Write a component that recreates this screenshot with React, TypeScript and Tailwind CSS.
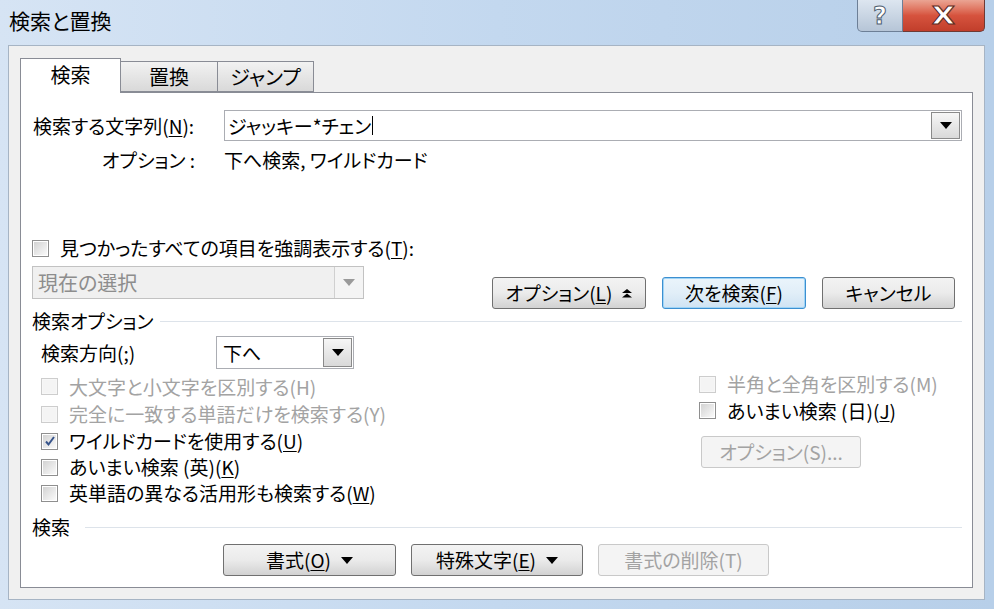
import React from 'react';

const font = "font-['Noto_Sans_CJK_JP','Noto_Sans',sans-serif] [font-feature-settings:'palt']";

const DownArrow = ({ color = '#000' }: { color?: string }) => (
  <svg width="12" height="7" viewBox="0 0 12 7">
    <path d="M0 0h12L6 7z" fill={color} />
  </svg>
);

const DropBtn = ({ disabled = false }: { disabled?: boolean }) => (
  <div
    className={`w-[29px] h-full flex items-center justify-center border-l ${
      disabled
        ? 'border-[#d0d0d0] bg-[#f4f4f4]'
        : 'border-[#8a8a8a] border bg-gradient-to-b from-[#f6f6f6] to-[#d9d9d9]'
    }`}
  >
    <DownArrow color={disabled ? '#9a9a9a' : '#000'} />
  </div>
);

const Checkbox = ({ checked = false, disabled = false }: { checked?: boolean; disabled?: boolean }) => (
  <div
    className={`w-[17px] h-[17px] shrink-0 border flex items-center justify-center ${
      disabled ? 'border-[#cdcdcd] bg-[#f7f7f7]' : 'border-[#8f8f8f] bg-white'
    }`}
  >
    <div
      className={`w-[13px] h-[13px] flex items-center justify-center ${
        disabled ? 'bg-[#f4f4f4]' : 'bg-gradient-to-br from-[#d3d3d3] to-[#fafafa]'
      }`}
    >
      {checked && (
        <svg width="12" height="12" viewBox="0 0 12 12">
          <path d="M2 6.5l2.5 3L10 2" stroke="#36538a" strokeWidth="2" fill="none" />
        </svg>
      )}
    </div>
  </div>
);

const CheckRow = ({
  label,
  checked,
  disabled,
  h,
}: {
  label: React.ReactNode;
  checked?: boolean;
  disabled?: boolean;
  h: string;
}) => (
  <div className={`flex items-center gap-[11px] ${h}`}>
    <Checkbox checked={checked} disabled={disabled} />
    <span className={disabled ? 'text-[#a3a3a3]' : 'text-black'}>{label}</span>
  </div>
);

const Button = ({
  children,
  w,
  focused = false,
  disabled = false,
}: {
  children: React.ReactNode;
  w: string;
  focused?: boolean;
  disabled?: boolean;
}) => (
  <div
    className={`${w} h-[32px] rounded-[3px] border flex items-center justify-center gap-[10px] ${
      disabled
        ? 'border-[#c9c9c9] bg-[#f4f4f4] text-[#a3a3a3]'
        : focused
          ? 'border-[#3c8fd0] bg-gradient-to-b from-[#eaf4fb] via-[#e1eef8] to-[#cfe3f3] text-black shadow-[inset_0_0_0_1px_#9fd4f6]'
          : 'border-[#707070] bg-gradient-to-b from-[#f3f3f3] via-[#ebebeb] to-[#d2d2d2] text-black'
    }`}
  >
    {children}
  </div>
);

const Section = ({ title, lineFrom }: { title: string; lineFrom: string }) => (
  <div className="flex items-center h-[20px]">
    <span className={lineFrom}>{title}</span>
    <div className="flex-1 h-px bg-[#dde3ea]" />
  </div>
);

export default function App() {
  return (
    <div
      className={`w-[994px] h-[609px] flex flex-col bg-gradient-to-r from-[#d6e4f4] via-[#c3d8ef] to-[#b7cfe9] text-[19px] leading-[22px] ${font}`}
    >
      {/* title bar */}
      <div className="h-[45px] flex justify-between items-start">
        <div className="pl-[9px] pt-[9px] text-[21px] text-black">検索と置換</div>
        <div className="flex mr-[9px]">
          <div className="w-[46px] h-[32px] rounded-bl-[5px] border border-t-0 border-[#6d7f96] bg-gradient-to-b from-[#dde6f0] to-[#b6c5d7] flex items-center justify-center">
            <span className="text-[24px] font-bold text-white [-webkit-text-stroke:1px_#4e5d70] font-['DejaVu_Sans',sans-serif] leading-none">?</span>
          </div>
          <div className="w-[82px] h-[32px] rounded-br-[5px] border border-t-0 border-l-0 border-[#6e3a34] bg-gradient-to-b from-[#eaa493] via-[#d6533e] to-[#c13e2b] flex items-center justify-center">
            <span className="text-[24px] font-bold text-white [-webkit-text-stroke:1px_#5a2a22] font-['DejaVu_Sans',sans-serif] leading-none scale-x-125">X</span>
          </div>
        </div>
      </div>

      {/* client area */}
      <div className="flex-1 ml-[8px] mr-[9px] mb-[9px] bg-[#f0f0f0] border border-[#a6b4c4] px-[11px] pt-[12px] pb-[11px] flex flex-col">
        {/* tabs */}
        <div className="flex items-end h-[35px] relative z-10">
          <div className="w-[101px] h-[35px] bg-white border border-b-0 border-[#898c95] flex items-center justify-center pb-[2px] text-[20px]">
            検索
          </div>
          <div className="w-[97px] h-[31px] mb-px border border-l-0 border-[#898c95] bg-gradient-to-b from-[#f2f2f2] to-[#d9d9d9] flex items-center justify-center text-[20px]">
            置換
          </div>
          <div className="w-[96px] h-[31px] mb-px border border-l-0 border-[#898c95] bg-gradient-to-b from-[#f2f2f2] to-[#d9d9d9] flex items-center justify-center text-[20px]">
            ジャンプ
          </div>
        </div>

        {/* panel */}
        <div className="flex-1 -mt-px bg-white border border-[#898c95] pl-[11px] pr-[10px] pt-[17px] flex flex-col">
          {/* search string */}
          <div className="flex items-center h-[31px]">
            <div className="w-[192px] pl-px">
              検索する文字列(<u className="underline-offset-2">N</u>):
            </div>
            <div className="flex-1 h-full border border-[#abadb3] flex items-center pr-px py-px">
              <div className="flex-1 pl-[3px] flex items-center">
                ジャッキー*チェン<span className="w-px h-[19px] bg-black ml-px" />
              </div>
              <DropBtn />
            </div>
          </div>

          <div className="flex items-center h-[22px] mt-[8px]">
            <div className="w-[192px] text-right pr-[29px]">オプション :</div>
            <div>下へ検索, ワイルドカード</div>
          </div>

          {/* highlight */}
          <div className="mt-[66px]">
            <CheckRow h="h-[22px]" label={<>見つかったすべての項目を強調表示する(<u className="underline-offset-2">T</u>):</>} />
          </div>

          <div className="flex items-start mt-[7px]">
            <div className="w-[332px] h-[33px] border border-[#c2c2c2] bg-[#f0f0f0] flex items-center">
              <div className="flex-1 pl-[5px] text-[#8d8d8d] text-[20px]">現在の選択</div>
              <DropBtn disabled />
            </div>
            <div className="flex ml-[128px] mt-[11px] gap-[16px]">
              <Button w="w-[154px]">
                <span>オプション(<u className="underline-offset-2">L</u>)</span>
                <svg width="10" height="9" viewBox="0 0 10 9">
                  <path d="M5 0L10 4H0z M5 4.5L10 8.5H0z" fill="#000" />
                </svg>
              </Button>
              <Button w="w-[144px]" focused>
                <span>次を検索(<u className="underline-offset-2">F</u>)</span>
              </Button>
              <Button w="w-[133px]">
                <span>キャンセル</span>
              </Button>
            </div>
          </div>

          {/* search options */}
          <div className="mt-[2px]">
            <Section title="検索オプション" lineFrom="w-[128px]" />
          </div>

          <div className="flex items-center h-[33px] mt-[5px]">
            <div className="w-[184px] pl-[9px]">
              検索方向(<u className="underline-offset-2">;</u>)
            </div>
            <div className="w-[138px] h-full border border-[#abadb3] flex items-center py-px pr-px">
              <div className="flex-1 pl-[6px]">下へ</div>
              <DropBtn />
            </div>
          </div>

          <div className="flex mt-[2px]">
            <div className="w-[667px] pl-[9px] pt-[2px] flex flex-col">
              <CheckRow h="h-[27px]" disabled label="大文字と小文字を区別する(H)" />
              <CheckRow h="h-[28px]" disabled label="完全に一致する単語だけを検索する(Y)" />
              <CheckRow h="h-[26px]" checked label={<>ワイルドカードを使用する(<u className="underline-offset-2">U</u>)</>} />
              <CheckRow h="h-[26px]" label={<>あいまい検索 (英)(<u className="underline-offset-2">K</u>)</>} />
              <CheckRow h="h-[26px]" label={<>英単語の異なる活用形も検索する(<u className="underline-offset-2">W</u>)</>} />
            </div>
            <div className="flex flex-col">
              <CheckRow h="h-[26px]" disabled label="半角と全角を区別する(M)" />
              <CheckRow h="h-[27px]" label={<>あいまい検索 (日)(<u className="underline-offset-2">J</u>)</>} />
              <div className="mt-[12px] ml-[2px]">
                <Button w="w-[160px]" disabled>
                  <span>オプション(S)...</span>
                </Button>
              </div>
            </div>
          </div>

          {/* search */}
          <div className="mt-[11px]">
            <Section title="検索" lineFrom="w-[53px]" />
          </div>

          <div className="flex mt-[7px] ml-[191px] gap-[15px]">
            <Button w="w-[173px]">
              <span>書式(<u className="underline-offset-2">O</u>)</span>
              <DownArrow />
            </Button>
            <Button w="w-[172px]">
              <span>特殊文字(<u className="underline-offset-2">E</u>)</span>
              <DownArrow />
            </Button>
            <Button w="w-[171px]" disabled>
              <span>書式の削除(T)</span>
            </Button>
          </div>
        </div>
      </div>
    </div>
  );
}
